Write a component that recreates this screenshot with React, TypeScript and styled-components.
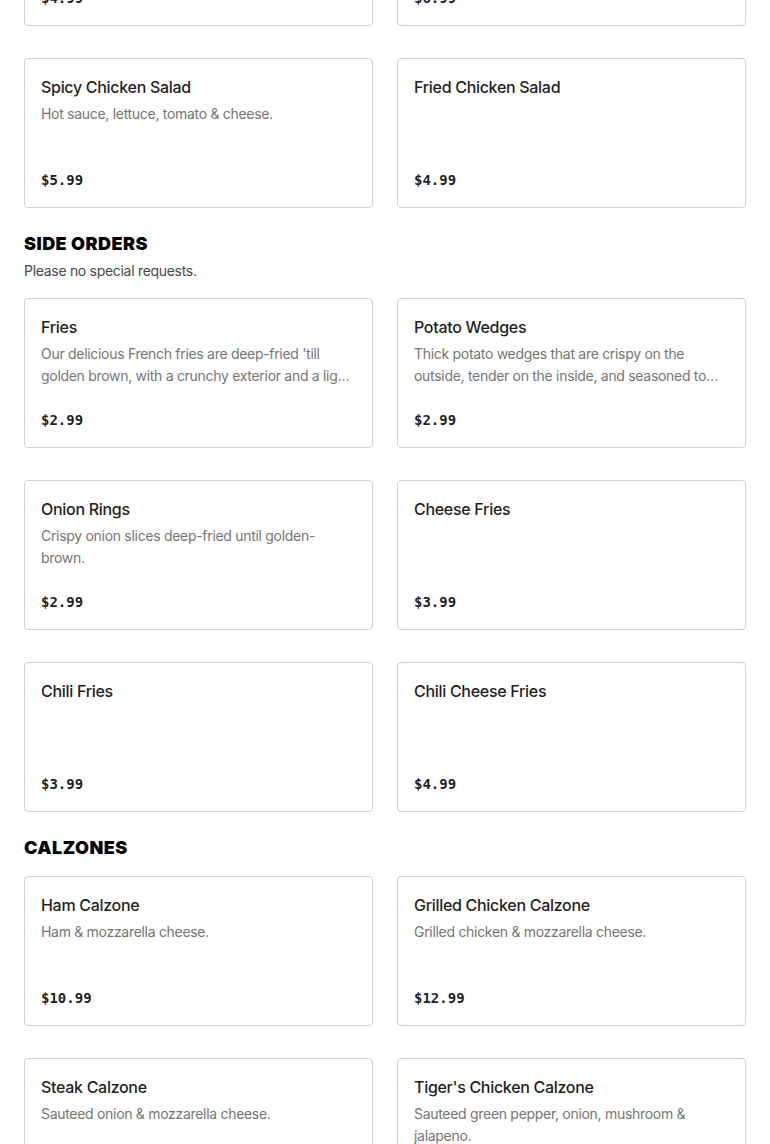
import * as React from "react";
import styled, { createGlobalStyle } from "styled-components";

interface MenuItem {
  name: string;
  description?: string;
  price: string;
}

interface MenuSection {
  title?: string;
  note?: string;
  items: MenuItem[];
}

const sections: MenuSection[] = [
  {
    items: [
      { name: "Chef Salad", description: "Ham, turkey, lettuce, tomato & cheese.", price: "$4.99" },
      { name: "Grilled Chicken Salad", description: "Grilled chicken, lettuce, tomato & cheese.", price: "$6.99" },
      {
        name: "Spicy Chicken Salad",
        description: "Hot sauce, lettuce, tomato & cheese.",
        price: "$5.99",
      },
      { name: "Fried Chicken Salad", price: "$4.99" },
    ],
  },
  {
    title: "SIDE ORDERS",
    note: "Please no special requests.",
    items: [
      {
        name: "Fries",
        description:
          "Our delicious French fries are deep-fried 'till golden brown, with a crunchy exterior and a light, fluffy interior.",
        price: "$2.99",
      },
      {
        name: "Potato Wedges",
        description:
          "Thick potato wedges that are crispy on the outside, tender on the inside, and seasoned to perfection.",
        price: "$2.99",
      },
      {
        name: "Onion Rings",
        description: "Crispy onion slices deep-fried until golden-brown.",
        price: "$2.99",
      },
      { name: "Cheese Fries", price: "$3.99" },
      { name: "Chili Fries", price: "$3.99" },
      { name: "Chili Cheese Fries", price: "$4.99" },
    ],
  },
  {
    title: "CALZONES",
    items: [
      { name: "Ham Calzone", description: "Ham & mozzarella cheese.", price: "$10.99" },
      {
        name: "Grilled Chicken Calzone",
        description: "Grilled chicken & mozzarella cheese.",
        price: "$12.99",
      },
      { name: "Steak Calzone", description: "Sauteed onion & mozzarella cheese.", price: "$12.99" },
      {
        name: "Tiger's Chicken Calzone",
        description: "Sauteed green pepper, onion, mushroom & jalapeno.",
        price: "$12.99",
      },
    ],
  },
];

const GlobalStyle = createGlobalStyle`
  body {
    margin: 0;
    background: #ffffff;
    font-family: Inter, "Liberation Sans", sans-serif;
    overflow: hidden;
  }
`;

const MenuItemCard: React.FC<{ item: MenuItem }> = ({ item }) => (
  <Card>
    <ItemName>{item.name}</ItemName>
    {item.description && <ItemDescription>{item.description}</ItemDescription>}
    <ItemPrice>{item.price}</ItemPrice>
  </Card>
);

export default function App() {
  return (
    <>
      <GlobalStyle />
      <Page>
        {sections.map((section, i) => (
          <Section key={i}>
            {section.title && (
              <SectionHeader>
                <SectionTitle>{section.title}</SectionTitle>
                {section.note && <SectionNote>{section.note}</SectionNote>}
              </SectionHeader>
            )}
            <Grid>
              {section.items.map((item) => (
                <MenuItemCard key={item.name} item={item} />
              ))}
            </Grid>
          </Section>
        ))}
      </Page>
    </>
  );
}

const Page = styled.main`
  display: flex;
  flex-direction: column;
  gap: 23px;
  padding: 0 24px;
  margin-top: -124px;
`;

const Section = styled.section`
  display: flex;
  flex-direction: column;
`;

const SectionHeader = styled.header`
  display: flex;
  flex-direction: column;
  gap: 4px;
  padding-top: 1px;
  margin-bottom: 16px;
`;

const SectionTitle = styled.h2`
  margin: 0;
  font-family: Inter, "Liberation Sans", sans-serif;
  font-size: 18px;
  font-weight: 900;
  line-height: 24px;
  letter-spacing: 0.45px;
  color: #000000;
`;

const SectionNote = styled.p`
  margin: 0;
  font-size: 14px;
  line-height: 22px;
  letter-spacing: -0.3px;
  color: #494949;
`;

const Grid = styled.div`
  display: grid;
  grid-template-columns: repeat(2, 1fr);
  column-gap: 24px;
  row-gap: 32px;
`;

const Card = styled.article`
  box-sizing: border-box;
  height: 150px;
  display: flex;
  flex-direction: column;
  padding: 16px;
  border: 1px solid #d0d0d0;
  border-radius: 4px;
  background: #ffffff;
`;

const ItemName = styled.h3`
  margin: 0 0 4px;
  font-size: 16px;
  font-weight: 500;
  line-height: 24px;
  letter-spacing: -0.3px;
  color: #1f1f1f;
`;

const ItemDescription = styled.p`
  margin: 0;
  font-size: 14px;
  line-height: 22px;
  letter-spacing: -0.3px;
  color: #767676;
  display: -webkit-box;
  -webkit-line-clamp: 2;
  -webkit-box-orient: vertical;
  overflow: hidden;
`;

const ItemPrice = styled.span`
  margin-top: auto;
  padding-bottom: 1px;
  font-family: "DejaVu Sans Mono", "Liberation Mono", monospace;
  font-size: 14px;
  font-weight: 700;
  line-height: 20px;
  color: #1f1f1f;
`;
